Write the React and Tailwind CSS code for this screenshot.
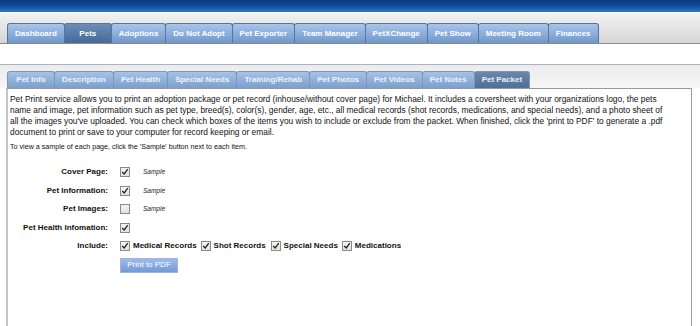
import { useState } from "react";

const mainTabs = [
  "Dashboard",
  "Pets",
  "Adoptions",
  "Do Not Adopt",
  "Pet Exporter",
  "Team Manager",
  "PetXChange",
  "Pet Show",
  "Meeting Room",
  "Finances",
];

const petTabs = [
  "Pet Info",
  "Description",
  "Pet Health",
  "Special Needs",
  "Training/Rehab",
  "Pet Photos",
  "Pet Videos",
  "Pet Notes",
  "Pet Packet",
];

// small grey checkbox with a tick
function Check({ checked, onChange }) {
  return (
    <button
      type="button"
      onClick={onChange}
      className="w-[10px] h-[10px] border border-[#8a8a8a] bg-gradient-to-b from-[#f4f4f4] to-[#e2e2e2] flex items-center justify-center shrink-0"
    >
      {checked && (
        <svg viewBox="0 0 10 10" className="w-[8px] h-[8px]">
          <path d="M1.5 5 L4 7.5 L8.5 1.5" fill="none" stroke="#222" strokeWidth="1.6" />
        </svg>
      )}
    </button>
  );
}

function Row({ label, children }) {
  return (
    <div className="flex items-center h-[12px]">
      <div className="w-[110px] text-right pr-[12px] font-bold text-[8px] text-[#111]">{label}</div>
      <div className="flex items-center">{children}</div>
    </div>
  );
}

export default function App() {
  const [items, setItems] = useState({
    cover: true,
    info: true,
    images: false,
    health: true,
    medical: true,
    shot: true,
    special: true,
    meds: true,
  });
  const toggle = (k) => setItems({ ...items, [k]: !items[k] });

  return (
    <div className="w-[700px] h-[326px] overflow-hidden bg-white" style={{ fontFamily: '"Liberation Sans", Arial, sans-serif' }}>
      {/* Top blue header strip */}
      <div className="h-[12px] bg-gradient-to-b from-[#083a78] via-[#0f4f9c] to-[#2f76c8]" />
      <div className="h-[1px] bg-white" />

      {/* Main nav tabs */}
      <div className="h-[31px] bg-gradient-to-b from-[#f2f2f2] to-[#d6d6d6] border-b border-[#8a8a8a] flex items-end pl-[7px]">
        {mainTabs.map((t) => (
          <div
            key={t}
            className={
              "h-[20px] min-w-[48px] px-[7px] flex items-center justify-center text-[8px] font-bold text-white border border-b-0 border-[#56749c] rounded-t-[3px] -ml-px first:ml-0 " +
              (t === "Pets"
                ? "bg-gradient-to-b from-[#6d8db5] to-[#46699a]"
                : "bg-gradient-to-b from-[#a9c6ea] to-[#7097cb]")
            }
          >
            {t}
          </div>
        ))}
      </div>

      <div className="h-[20px]" />

      {/* Pet sub tabs */}
      <div className="border-t border-[#a8b2c4] bg-gradient-to-b from-[#ececec] to-[#f6f6f6] pt-[6px] pl-[7px]">
        <div className="flex items-end">
          {petTabs.map((t) => (
            <div
              key={t}
              className={
                "h-[17px] min-w-[48px] px-[7px] flex items-center justify-center text-[8px] font-bold border border-b-0 border-[#7d95b6] rounded-t-[3px] -ml-px first:ml-0 " +
                (t === "Pet Packet"
                  ? "bg-gradient-to-b from-[#6a87ad] to-[#4f6f98] text-[#e8eef6]"
                  : "bg-gradient-to-b from-[#a6c2e6] to-[#7c9fcf] text-[#eef3fa]")
              }
            >
              {t}
            </div>
          ))}
        </div>
      </div>

      {/* Content panel */}
      <div className="ml-[6px] mr-[8px] border-l-2 border-r border-t border-l-[#c4c4c4] border-r-[#9a9a9a] border-t-[#9a9a9a] h-[240px] px-[2px] pt-[5px] text-[#111]">
        <p className="text-[8.4px] leading-[11px] whitespace-nowrap">
          Pet Print service allows you to print an adoption package or pet record (inhouse/without cover page) for Michael. It includes a coversheet with your organizations logo, the pets
          <br />
          name and image, pet information such as pet type, breed(s), color(s), gender, age, etc., all medical records (shot records, medications, and special needs), and a photo sheet of
          <br />
          all the images you've uploaded. You can check which boxes of the items you wish to include or exclude from the packet. When finished, click the 'print to PDF' to generate a .pdf
          <br />
          document to print or save to your computer for record keeping or email.
        </p>
        <p className="text-[7.15px] leading-[11px] mt-[4px]">
          To view a sample of each page, click the 'Sample' button next to each item.
        </p>

        <div className="mt-[13px] flex flex-col gap-[6.5px]">
          <Row label="Cover Page:">
            <Check checked={items.cover} onChange={() => toggle("cover")} />
            <span className="ml-[13px] text-[6.5px] italic text-[#222]">Sample</span>
          </Row>
          <Row label="Pet Information:">
            <Check checked={items.info} onChange={() => toggle("info")} />
            <span className="ml-[13px] text-[6.5px] italic text-[#222]">Sample</span>
          </Row>
          <Row label="Pet Images:">
            <Check checked={items.images} onChange={() => toggle("images")} />
            <span className="ml-[13px] text-[6.5px] italic text-[#222]">Sample</span>
          </Row>
          <Row label="Pet Health Infomation:">
            <Check checked={items.health} onChange={() => toggle("health")} />
          </Row>
          <Row label="Include:">
            <Check checked={items.medical} onChange={() => toggle("medical")} />
            <span className="ml-[3px] mr-[4px] text-[8px] font-bold">Medical Records</span>
            <Check checked={items.shot} onChange={() => toggle("shot")} />
            <span className="ml-[3px] mr-[5px] text-[8px] font-bold">Shot Records</span>
            <Check checked={items.special} onChange={() => toggle("special")} />
            <span className="ml-[3px] mr-[4px] text-[8px] font-bold">Special Needs</span>
            <Check checked={items.meds} onChange={() => toggle("meds")} />
            <span className="ml-[3px] text-[8px] font-bold">Medications</span>
          </Row>
          <div className="flex pl-[110px] -mt-[1px]">
            <button
              type="button"
              className="w-[58px] h-[15px] border border-[#9fb6da] bg-gradient-to-b from-[#9dbbea] to-[#7399d6] text-white text-[8px] leading-none"
            >
              Print to PDF
            </button>
          </div>
        </div>
      </div>
    </div>
  );
}
